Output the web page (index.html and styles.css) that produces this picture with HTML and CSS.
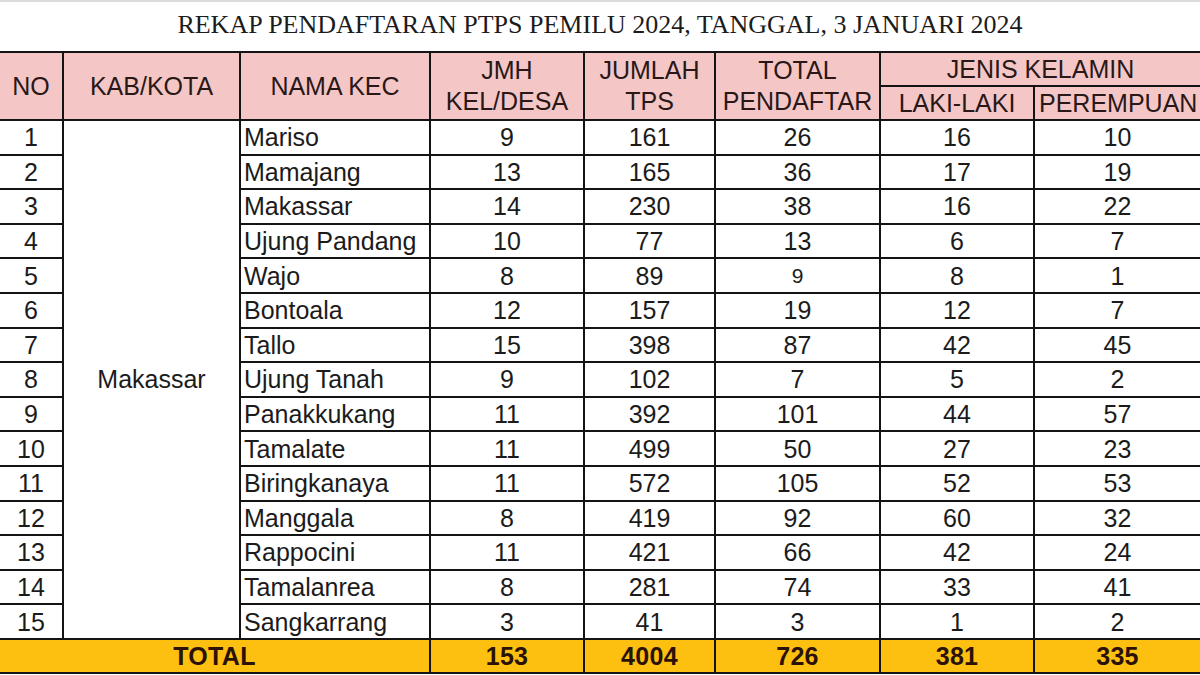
FILE: index.html
```html
<!DOCTYPE html>
<html lang="id">
<head>
<meta charset="utf-8">
<title>Rekap Pendaftaran PTPS</title>
<link rel="stylesheet" href="styles.css">
</head>
<body>
<div class="page">
  <h1 class="title">REKAP PENDAFTARAN PTPS PEMILU 2024, TANGGAL, 3 JANUARI 2024</h1>
  <table class="rekap">
    <colgroup>
      <col class="c-no"><col class="c-kab"><col class="c-kec"><col class="c-jmh">
      <col class="c-tps"><col class="c-total"><col class="c-laki"><col class="c-per">
    </colgroup>
    <thead>
      <tr class="h1">
        <th rowspan="2" class="first">NO</th>
        <th rowspan="2">KAB/KOTA</th>
        <th rowspan="2">NAMA KEC</th>
        <th rowspan="2">JMH<br>KEL/DESA</th>
        <th rowspan="2">JUMLAH<br>TPS</th>
        <th rowspan="2">TOTAL<br>PENDAFTAR</th>
        <th colspan="2" class="last">JENIS KELAMIN</th>
      </tr>
      <tr class="h2">
        <th>LAKI-LAKI</th>
        <th class="last per">PEREMPUAN</th>
      </tr>
    </thead>
    <tbody>
      <tr><td class="first">1</td><td rowspan="15" class="kab">Makassar</td><td class="kec">Mariso</td><td>9</td><td>161</td><td>26</td><td>16</td><td class="last">10</td></tr>
      <tr><td class="first">2</td><td class="kec">Mamajang</td><td>13</td><td>165</td><td>36</td><td>17</td><td class="last">19</td></tr>
      <tr><td class="first">3</td><td class="kec">Makassar</td><td>14</td><td>230</td><td>38</td><td>16</td><td class="last">22</td></tr>
      <tr><td class="first">4</td><td class="kec">Ujung Pandang</td><td>10</td><td>77</td><td>13</td><td>6</td><td class="last">7</td></tr>
      <tr><td class="first">5</td><td class="kec">Wajo</td><td>8</td><td>89</td><td class="small">9</td><td>8</td><td class="last">1</td></tr>
      <tr><td class="first">6</td><td class="kec">Bontoala</td><td>12</td><td>157</td><td>19</td><td>12</td><td class="last">7</td></tr>
      <tr><td class="first">7</td><td class="kec">Tallo</td><td>15</td><td>398</td><td>87</td><td>42</td><td class="last">45</td></tr>
      <tr><td class="first">8</td><td class="kec">Ujung Tanah</td><td>9</td><td>102</td><td>7</td><td>5</td><td class="last">2</td></tr>
      <tr><td class="first">9</td><td class="kec">Panakkukang</td><td>11</td><td>392</td><td>101</td><td>44</td><td class="last">57</td></tr>
      <tr><td class="first">10</td><td class="kec">Tamalate</td><td>11</td><td>499</td><td>50</td><td>27</td><td class="last">23</td></tr>
      <tr><td class="first">11</td><td class="kec">Biringkanaya</td><td>11</td><td>572</td><td>105</td><td>52</td><td class="last">53</td></tr>
      <tr><td class="first">12</td><td class="kec">Manggala</td><td>8</td><td>419</td><td>92</td><td>60</td><td class="last">32</td></tr>
      <tr><td class="first">13</td><td class="kec">Rappocini</td><td>11</td><td>421</td><td>66</td><td>42</td><td class="last">24</td></tr>
      <tr><td class="first">14</td><td class="kec">Tamalanrea</td><td>8</td><td>281</td><td>74</td><td>33</td><td class="last">41</td></tr>
      <tr><td class="first">15</td><td class="kec">Sangkarrang</td><td>3</td><td>41</td><td>3</td><td>1</td><td class="last">2</td></tr>
    </tbody>
    <tfoot>
      <tr class="total">
        <td colspan="3" class="first">TOTAL</td>
        <td>153</td><td>4004</td><td>726</td><td>381</td><td class="last">335</td>
      </tr>
    </tfoot>
  </table>
</div>
</body>
</html>
```

FILE: styles.css
```css
* { box-sizing: border-box; }
html, body { margin: 0; padding: 0; background: #ffffff; }
.page {
  width: 1200px;
  height: 675px;
  overflow: hidden;
  border-top: 2px solid #dcdcdc;
}
.title {
  margin: 0;
  height: 49px;
  padding-top: 8px;
  text-align: center;
  font-family: "Liberation Serif", "Times New Roman", serif;
  font-weight: normal;
  font-size: 26px;
  line-height: 30px;
  color: #1c1c1c;
}
.rekap {
  width: 1200px;
  table-layout: fixed;
  border-collapse: collapse;
  font-family: "Liberation Sans", Arial, sans-serif;
  font-size: 25px;
  color: #1b1b1b;
}
.c-no { width: 63px; }
.c-kab { width: 177px; }
.c-kec { width: 190px; }
.c-jmh { width: 154px; }
.c-tps { width: 131px; }
.c-total { width: 165px; }
.c-laki { width: 154px; }
.c-per { width: 166px; }

.rekap th, .rekap td {
  border: 2px solid #141414;
  padding: 0;
  text-align: center;
  vertical-align: middle;
  white-space: nowrap;
  overflow: hidden;
}
.rekap .first { border-left: none; }
.rekap .last { border-right: none; }

.rekap thead th {
  background: #f4c7c6;
  font-weight: normal;
  color: #2a1717;
  line-height: 31px;
}
.rekap thead th.per { text-align: left; padding-left: 4px; }
.rekap .h1 { height: 34px; }
.rekap .h2 { height: 34px; }

.rekap tbody tr { height: 34.6px; }
.rekap tbody td { line-height: 30px; }
.rekap td.kec { text-align: left; padding-left: 3px; }
.rekap td.kab { background: #ffffff; }
.rekap td.small { font-size: 21px; }

.rekap .total { height: 34px; }
.rekap .total td {
  background: #fdbf10;
  font-weight: bold;
  color: #2a1206;
  font-size: 25px;
  line-height: 30px;
  letter-spacing: 0.3px;
}
```
